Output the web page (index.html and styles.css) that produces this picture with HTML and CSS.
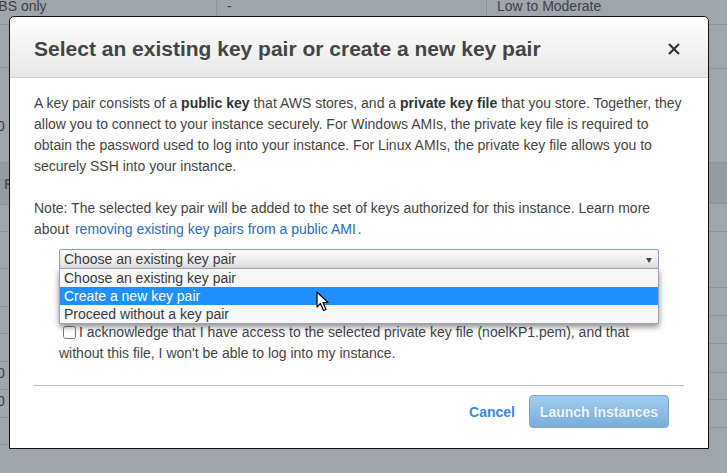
FILE: index.html
```html
<!DOCTYPE html>
<html>
<head>
<meta charset="utf-8">
<link rel="stylesheet" href="styles.css">
</head>
<body>
<div class="page">
  <div class="toprow">
    <div class="cell c1"><span class="clip">EBS only</span></div>
    <div class="cell c2">-</div>
    <div class="cell c3">Low to Moderate</div>
  </div>
  <div class="strips">
    <div class="strip left">
      <div class="r" style="height:43px"></div>
      <div class="r txt" style="height:95px"><span>0</span></div>
      <div class="r band" style="height:42px"><span>R</span></div>
      <div class="r" style="height:27px"></div>
      <div class="r" style="height:37px"></div>
      <div class="r" style="height:38px"></div>
      <div class="r" style="height:27px"></div>
      <div class="r" style="height:28px"></div>
      <div class="r txt low" style="height:28px"><span>0</span></div>
      <div class="r txt low" style="height:28px"><span>0</span></div>
      <div class="r" style="height:27px"></div>
    </div>
    <div class="strip mid"></div>
    <div class="strip right">
      <div class="r" style="height:44px"></div>
      <div class="r" style="height:94px"></div>
      <div class="r band" style="height:41px"></div>
      <div class="r" style="height:28px"></div>
      <div class="r" style="height:56px"></div>
      <div class="r" style="height:28px"></div>
      <div class="r" style="height:28px"></div>
      <div class="r" style="height:29px"></div>
      <div class="r" style="height:27px"></div>
      <div class="r" style="height:28px"></div>
    </div>
  </div>

  <div class="modal">
    <div class="modal-header">
      <h2 class="title">Select an existing key pair or create a new key pair</h2>
      <svg class="close" width="12" height="12" viewBox="0 0 12 12"><path d="M1 1 L11 11 M11 1 L1 11" stroke="#333" stroke-width="2.2" fill="none"/></svg>
    </div>
    <div class="modal-body">
      <p class="para">A key pair consists of a <b>public key</b> that AWS stores, and a <b>private key file</b> that you store. Together, they allow you to connect to your instance securely. For Windows AMIs, the private key file is required to obtain the password used to log into your instance. For Linux AMIs, the private key file allows you to securely SSH into your instance.</p>
      <p class="para note">Note: The selected key pair will be added to the set of keys authorized for this instance. Learn more about <a class="link" href="#">removing existing key pairs from a public AMI</a>.</p>
      <div class="select-wrap">
        <div class="select">
          <span>Choose an existing key pair</span>
          <span class="arrow"></span>
        </div>
        <ul class="dropdown">
          <li class="opt">Choose an existing key pair</li>
          <li class="opt active">Create a new key pair</li>
          <li class="opt">Proceed without a key pair</li>
        </ul>
        <svg class="cursor" width="14" height="21" viewBox="0 0 14 21"><path d="M1 1 L1 16 L4.5 12.5 L7.5 19.5 L10 18.5 L7 11.5 L12 11.5 Z" fill="#fff" stroke="#000" stroke-width="1.2" stroke-linejoin="round"/></svg>
      </div>
      <label class="ack"><input type="checkbox" class="chk">I acknowledge that I have access to the selected private key file (noelKP1.pem), and that without this file, I won't be able to log into my instance.</label>
      <div class="divider"></div>
    </div>
    <div class="modal-footer">
      <a class="cancel" href="#">Cancel</a>
      <button class="launch">Launch Instances</button>
    </div>
  </div>
</div>
</body>
</html>
```

FILE: styles.css
```css
* { box-sizing: border-box; }
html, body { margin: 0; padding: 0; }
body {
  width: 727px;
  height: 473px;
  overflow: hidden;
  background: #a0a4ab;
  font-family: "Liberation Sans", Arial, sans-serif;
  font-size: 14px;
  color: #444;
}
.page {
  position: relative;
  width: 727px;
  height: 473px;
}
.toprow {
  display: grid;
  grid-template-columns: 217px 270px 1fr;
  height: 25px;
  border-bottom: 1px solid #8f939a;
  color: #3e4146;
}
.cell {
  border-right: 1px solid #8f939a;
  padding: 0 10px;
  line-height: 12px;
  overflow: hidden;
  white-space: nowrap;
}
.cell.c3 { border-right: none; }
.c1 { padding: 0; }
.clip { display: inline-block; text-indent: -11px; }
.strips {
  display: flex;
  height: 448px;
}
.strip { display: flex; flex-direction: column; }
.strip.left { width: 9px; }
.strip.mid { flex: 1; }
.strip.right { width: 18px; }
.r {
  border-bottom: 1px solid #8f939a;
  flex: none;
  position: relative;
  color: #3e4146;
  overflow: hidden;
}
.r.band { background: #969aa1; }
.r span { display: block; line-height: 16px; }
.left .txt span { padding-top: 50px; margin-left: -3px; }
.left .txt.low span { padding-top: 3px; }
.left .band span { padding-top: 13px; margin-left: 4px; font-weight: bold; color: #555a60; }

.modal {
  position: absolute;
  left: 9px;
  top: 16px;
  width: 700px;
  height: 433px;
  background: #fff;
  border: 1px solid #111;
  border-radius: 5px 5px 0 0;
  display: flex;
  flex-direction: column;
  overflow: visible;
}
.modal-header {
  display: flex;
  align-items: center;
  justify-content: space-between;
  padding: 20px 28px 16px 24px;
  background: linear-gradient(#ffffff, #e7e7e7);
  border-bottom: 1px solid #cfcfcf;
  border-radius: 5px 5px 0 0;
}
.title {
  margin: 0;
  font-size: 21px;
  line-height: 24px;
  font-weight: bold;
  color: #444;
}
.close { display: block; }
.modal-body {
  padding: 15px 24px 0;
}
.para {
  margin: 0 0 21px;
  line-height: 21px;
  color: #444;
}
.para b { color: #333; }
.note { margin-bottom: 0; }
.link {
  color: #2a6cc2;
  text-decoration: none;
  margin: 0 2px;
}
.select-wrap {
  position: relative;
  margin: 9px 0 0 25px;
  width: 600px;
}
.select {
  height: 20px;
  border: 1px solid #7d9fd6;
  border-radius: 2px;
  background: linear-gradient(#fbfbfb, #e2e2e2);
  display: flex;
  align-items: center;
  justify-content: space-between;
  padding: 0 6px 0 4px;
  color: #3a3a3a;
  line-height: 18px;
}
.arrow {
  width: 0;
  height: 0;
  border-left: 3px solid transparent;
  border-right: 3px solid transparent;
  border-top: 5px solid #444;
  margin-top: 2px;
}
.dropdown {
  position: absolute;
  left: 0;
  top: 19px;
  width: 600px;
  margin: 0;
  padding: 0;
  list-style: none;
  background: #f7f7f7;
  border: 1px solid #9aa4b4;
  box-shadow: 0 3px 6px rgba(0, 0, 0, 0.45);
  z-index: 2;
}
.opt {
  height: 18px;
  line-height: 18px;
  padding-left: 4px;
  color: #3a3a3a;
}
.opt.active {
  background: #1e90ff;
  color: #fff;
}
.cursor {
  position: absolute;
  left: 257px;
  top: 42px;
  z-index: 3;
}
.ack {
  display: block;
  margin: 53px 0 0 25px;
  width: 600px;
  line-height: 21px;
  color: #444;
}
.chk {
  width: 13px;
  height: 13px;
  margin: 0 3px 0 4px;
  vertical-align: -2px;
}
.divider {
  height: 1px;
  background: #bdbdbd;
  margin-top: 21px;
}
.modal-footer {
  display: flex;
  justify-content: flex-end;
  align-items: center;
  padding: 9px 39px 0 0;
}
.cancel {
  color: #3a8ae2;
  font-weight: bold;
  text-decoration: none;
  margin-right: 14px;
}
.launch {
  width: 140px;
  height: 33px;
  border: 1px solid #7aa8d2;
  border-radius: 4px;
  background: linear-gradient(#a0cdf0, #7badd8);
  color: #eef5fb;
  font-family: "Liberation Sans", Arial, sans-serif;
  font-size: 14px;
  font-weight: bold;
  text-shadow: 0 0 1px rgba(90, 130, 170, 0.5);
  padding: 0;
}
```
